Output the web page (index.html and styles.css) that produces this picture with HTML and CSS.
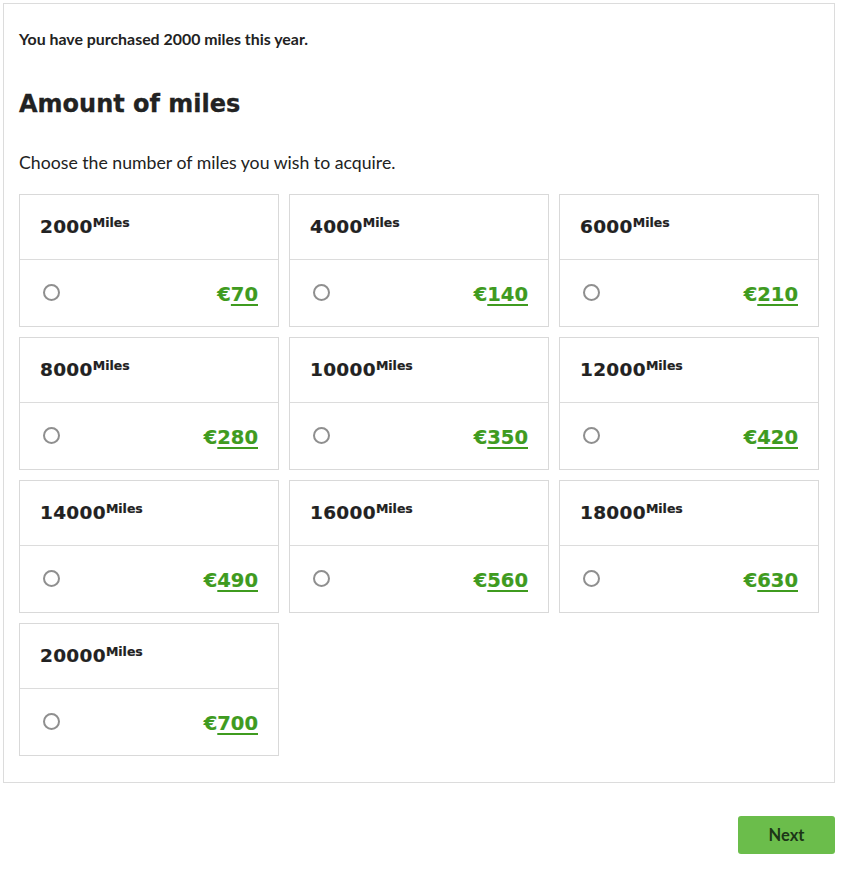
FILE: index.html
```html
<!DOCTYPE html>
<html lang="en">
<head>
<meta charset="utf-8">
<title>Amount of miles</title>
<link rel="stylesheet" href="styles.css">
</head>
<body>
<div class="page">
  <section class="panel">
    <p class="purchased">You have purchased 2000 miles this year.</p>
    <h1 class="title">Amount of miles</h1>
    <p class="intro">Choose the number of miles you wish to acquire.</p>
    <div class="grid">
      <label class="card"><div class="card-head"><span class="num">2000</span><sup class="unit">Miles</sup></div><div class="card-body"><input type="radio" name="miles" class="radio"><span class="price">€<u>70</u></span></div></label>
      <label class="card"><div class="card-head"><span class="num">4000</span><sup class="unit">Miles</sup></div><div class="card-body"><input type="radio" name="miles" class="radio"><span class="price">€<u>140</u></span></div></label>
      <label class="card"><div class="card-head"><span class="num">6000</span><sup class="unit">Miles</sup></div><div class="card-body"><input type="radio" name="miles" class="radio"><span class="price">€<u>210</u></span></div></label>
      <label class="card"><div class="card-head"><span class="num">8000</span><sup class="unit">Miles</sup></div><div class="card-body"><input type="radio" name="miles" class="radio"><span class="price">€<u>280</u></span></div></label>
      <label class="card"><div class="card-head"><span class="num">10000</span><sup class="unit">Miles</sup></div><div class="card-body"><input type="radio" name="miles" class="radio"><span class="price">€<u>350</u></span></div></label>
      <label class="card"><div class="card-head"><span class="num">12000</span><sup class="unit">Miles</sup></div><div class="card-body"><input type="radio" name="miles" class="radio"><span class="price">€<u>420</u></span></div></label>
      <label class="card"><div class="card-head"><span class="num">14000</span><sup class="unit">Miles</sup></div><div class="card-body"><input type="radio" name="miles" class="radio"><span class="price">€<u>490</u></span></div></label>
      <label class="card"><div class="card-head"><span class="num">16000</span><sup class="unit">Miles</sup></div><div class="card-body"><input type="radio" name="miles" class="radio"><span class="price">€<u>560</u></span></div></label>
      <label class="card"><div class="card-head"><span class="num">18000</span><sup class="unit">Miles</sup></div><div class="card-body"><input type="radio" name="miles" class="radio"><span class="price">€<u>630</u></span></div></label>
      <label class="card"><div class="card-head"><span class="num">20000</span><sup class="unit">Miles</sup></div><div class="card-body"><input type="radio" name="miles" class="radio"><span class="price">€<u>700</u></span></div></label>
    </div>
  </section>
  <div class="actions">
    <button class="next" type="button">Next</button>
  </div>
</div>
</body>
</html>
```

FILE: styles.css
```css
* { box-sizing: border-box; }
html, body { margin: 0; padding: 0; background: #fff; }
body {
  font-family: Lato, "Liberation Sans", sans-serif;
  color: #222;
}
.page {
  width: 832px;
  margin: 3px 0 0 3px;
}
.panel {
  border: 1px solid #dcdcdc;
  padding: 23px 15px 26px 15px;
}
.purchased {
  margin: 0;
  font-size: 15.9px;
  font-weight: 700;
  line-height: 24px;
}
.title {
  margin: 37px 0 0 0;
  font-family: "DejaVu Sans", sans-serif;
  font-weight: 700;
  font-size: 24px;
  line-height: 32px;
  letter-spacing: 0;
  color: #222;
  -webkit-text-stroke: 0.3px #222;
}
.intro {
  margin: 30px 0 0 0;
  font-size: 17.7px;
  line-height: 26px;
}
.grid {
  margin-top: 18px;
  display: grid;
  grid-template-columns: repeat(3, 1fr);
  column-gap: 10px;
  row-gap: 10px;
}
.card {
  display: block;
  border: 1px solid #d9d9d9;
  height: 133px;
  cursor: pointer;
}
.card-head {
  height: 65px;
  border-bottom: 1px solid #dcdcdc;
  padding: 20px 20px 0 20px;
  font-family: "DejaVu Sans", sans-serif;
  font-weight: 700;
  color: #222;
  line-height: 24px;
  -webkit-text-stroke: 0.2px #222;
}
.num {
  font-size: 18.5px;
  letter-spacing: 0.3px;
}
.unit {
  font-size: 12.5px;
  vertical-align: 6px;
  line-height: 0;
}
.card-body {
  height: 66px;
  display: flex;
  align-items: center;
  justify-content: space-between;
  padding: 0 20px 0 23px;
}
.radio {
  -webkit-appearance: none;
  appearance: none;
  width: 17px;
  height: 17px;
  margin: 0 0 2px 0;
  border: 2px solid #8f8f8f;
  border-radius: 50%;
  background: #fff;
}
.price {
  font-family: "DejaVu Sans", sans-serif;
  font-weight: 700;
  font-size: 19.5px;
  color: #3f9b1f;
  margin-top: 2px;
  -webkit-text-stroke: 0.2px #3f9b1f;
}
.price u {
  text-decoration-thickness: 2px;
  text-underline-offset: 3px;
}
.actions {
  display: flex;
  justify-content: flex-end;
  margin-top: 33px;
}
.next {
  width: 97px;
  height: 38px;
  border: 0;
  border-radius: 3px;
  background: #6bbd4b;
  color: #1c3517;
  font-family: Lato, "Liberation Sans", sans-serif;
  font-size: 16.5px;
  font-weight: 700;
  cursor: pointer;
}
```
